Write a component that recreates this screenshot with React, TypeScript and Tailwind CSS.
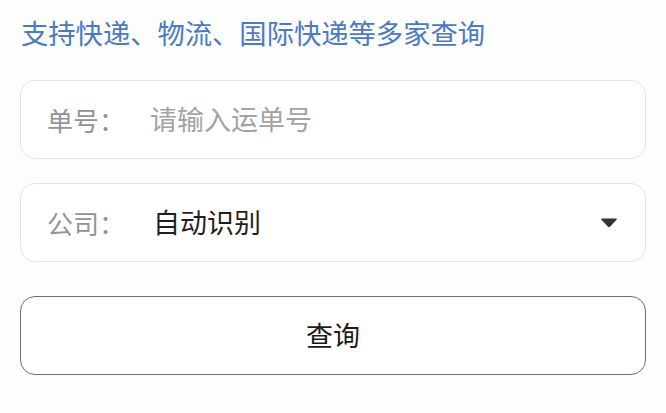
import React from 'react';

const font = { fontFamily: '"Noto Sans CJK SC", "Noto Sans", sans-serif' };

const Field: React.FC<{ label: string; children: React.ReactNode }> = ({ label, children }) => (
  <div className="h-[79px] rounded-[15px] border border-[#e4e4e4] bg-white flex items-center pl-[26px] pr-[27px]">
    <span className="w-[103px] shrink-0 text-[26px] text-[#939393]">{label}</span>
    <div className="flex-1 flex items-center">{children}</div>
  </div>
);

export default function App() {
  return (
    <div
      className="w-[666px] h-[413px] bg-[#fdfdfd] px-[20px] pt-[12px] flex flex-col"
      style={font}
    >
      <div className="h-[40px] leading-[40px] text-[27.3px] text-[#4b7ac4] pl-[1px]">
        支持快递、物流、国际快递等多家查询
      </div>
      <div className="mt-[28px]">
        <Field label="单号：">
          <span className="text-[27px] text-[#a3a3a3]">请输入运单号</span>
        </Field>
      </div>
      <div className="mt-[24px]">
        <Field label="公司：">
          <span className="text-[27px] text-[#1f1f1f] pl-[3px]">自动识别</span>
          <svg className="ml-auto" width="18" height="11" viewBox="0 0 18 11">
            <path d="M2 1.5 H16 Q17.5 1.5 16.6 2.8 L10.2 9.6 Q9 10.8 7.8 9.6 L1.4 2.8 Q0.5 1.5 2 1.5 Z" fill="#333" />
          </svg>
        </Field>
      </div>
      <button className="mt-[34px] h-[79px] rounded-[15px] border-[1.5px] border-[#6e6e6e] bg-white text-[27px] text-[#1a1a1a]">
        查询
      </button>
    </div>
  );
}
